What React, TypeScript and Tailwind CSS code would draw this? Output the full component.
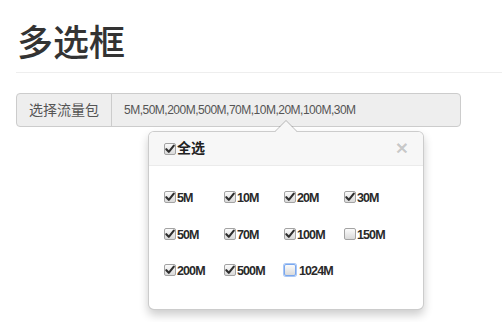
import React from "react";

const SIZES: { label: string; checked: boolean; focus?: boolean }[] = [
  { label: "5M", checked: true },
  { label: "10M", checked: true },
  { label: "20M", checked: true },
  { label: "30M", checked: true },
  { label: "50M", checked: true },
  { label: "70M", checked: true },
  { label: "100M", checked: true },
  { label: "150M", checked: false },
  { label: "200M", checked: true },
  { label: "500M", checked: true },
  { label: "1024M", checked: false, focus: true },
];

function Box({ checked, focus = false }: { checked: boolean; focus?: boolean }) {
  return (
    <span
      className={`relative inline-block w-[12px] h-[12px] shrink-0 rounded-[2px] border bg-gradient-to-b from-[#fbfbfb] to-[#dadada] ${
        focus ? "border-[#7aa7ee] ring-1 ring-[#a9c7f5]" : "border-[#a3a3a3]"
      }`}
    >
      {checked && (
        <svg viewBox="0 0 12 12" className="absolute -left-px -top-px w-[12px] h-[12px]">
          <path d="M2.3 6.2 L4.8 8.8 L9.8 2.6" fill="none" stroke="#2f2f2f" strokeWidth="2.1" strokeLinecap="round" strokeLinejoin="round" />
        </svg>
      )}
    </span>
  );
}

export default function App() {
  return (
    <div className="w-[502px] h-[322px] overflow-hidden bg-white pl-4 font-['Liberation_Sans','Noto_Sans_CJK_SC',sans-serif] text-[#333]">
      {/* page header */}
      <div className="pt-[24px] pb-[8px] border-b border-[#eee]">
        <h1 className="text-[36px] leading-[40px] font-medium pl-[1px]">多选框</h1>
      </div>

      {/* input group */}
      <div className="relative mt-5 flex w-[445px] h-[34px] rounded-[4px] border border-[#ccc] bg-[#eee] text-[#555]">
        <div className="flex items-center px-3 border-r border-[#ccc] text-[14px]">选择流量包</div>
        <div className="flex items-center pl-3 text-[12px] tracking-[-0.5px]">
          5M,50M,200M,500M,70M,10M,20M,100M,30M
        </div>

        {/* popover */}
        <div className="absolute left-[131px] top-[37px] w-[276px] rounded-[6px] border border-black/20 bg-white shadow-[0_5px_10px_rgba(0,0,0,0.2)]">
          <svg width="22" height="12" className="absolute left-[126px] -top-[12px]">
            <polygon points="0,12 11,0.5 22,12" fill="#f7f7f7" />
            <polyline points="0,11.5 11,0.5 22,11.5" fill="none" stroke="rgba(0,0,0,0.25)" strokeWidth="1" />
          </svg>
          <div className="flex items-center justify-between rounded-t-[5px] bg-[#f7f7f7] border-b border-[#ebebeb] pl-[15px] pr-[15px] h-[34px]">
            <label className="flex items-center gap-[1px] text-[14px] font-bold text-[#222]">
              <Box checked />
              全选
            </label>
            <span className="text-[21px] font-bold leading-none text-black/20 -mt-[2px]">×</span>
          </div>
          <div className="grid grid-cols-[60px_60px_60px_60px] gap-y-[23.5px] pl-[15px] pt-[26px] pb-[31px]">
            {SIZES.map((s) => (
              <label key={s.label} className="flex items-start h-[13px]">
                <span className="-mt-[1px] mr-[1px] flex">
                  <Box checked={s.checked} focus={s.focus} />
                </span>
                <span className={`text-[12.5px] leading-[13px] font-bold tracking-[-0.9px] text-[#2a2a2a] ${s.focus ? "ml-[2px]" : ""}`}>
                  {s.label}
                </span>
              </label>
            ))}
          </div>
        </div>
      </div>
    </div>
  );
}
